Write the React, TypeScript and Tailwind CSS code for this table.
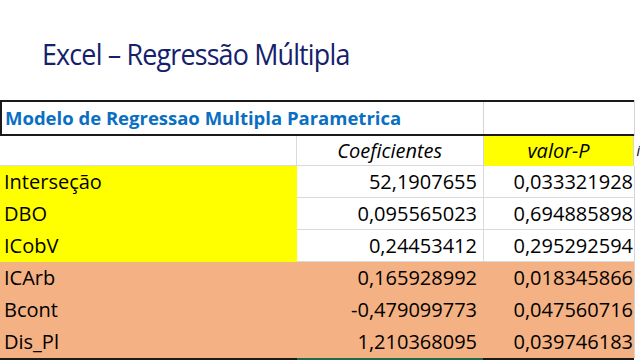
import React from "react";

const rows = [
  { label: "Interseção", b: "52,1907655", c: "0,033321928", kind: "y" },
  { label: "DBO", b: "0,095565023", c: "0,694885898", kind: "y" },
  { label: "ICobV", b: "0,24453412", c: "0,295292594", kind: "y" },
  { label: "ICArb", b: "0,165928992", c: "0,018345866", kind: "o" },
  { label: "Bcont", b: "-0,479099773", c: "0,047560716", kind: "o" },
  { label: "Dis_Pl", b: "1,210368095", c: "0,039746183", kind: "o" },
];

export default function App() {
  return (
    <div
      className="w-[640px] h-[360px] overflow-hidden bg-white flex flex-col"
      style={{ fontFamily: '"Open Sans", sans-serif' }}
    >
      <div className="h-[100px] flex items-center pl-[42px] pt-[8px]">
        <div className="text-[29.5px] leading-none tracking-[-0.9px] text-[#14216b] origin-left scale-x-[0.91] whitespace-nowrap">
          Excel – Regressão Múltipla
        </div>
      </div>
      <div className="flex flex-col text-[20px] text-black">
        {/* row 1 */}
        <div className="flex">
          <div className="w-[634px] flex border-t-2 border-b-2 border-l-2 border-[#1a1a1a] h-[36px]">
            <div className="w-[481px] flex items-center pl-[3px] text-[18.5px] font-bold text-[#0a6fc2] whitespace-nowrap">
              Modelo de Regressao Multipla Parametrica
            </div>
            <div className="w-[151px] border-l border-[#d4d4d4]" />
          </div>
          <div className="flex-1 border-l border-[#d4d4d4]" />
        </div>
        {/* row 2 header */}
        <div className="flex h-[30px]">
          <div className="w-[297px] border-b border-r border-[#d9d9d9]" />
          <div className="w-[186px] border-b border-[#d9d9d9] flex items-center justify-center italic">
            Coeficientes
          </div>
          <div className="w-[151px] bg-[#ffff00] flex items-center justify-center italic border-l border-[#d4d4d4]">
            valor-P
          </div>
          <div className="flex-1 border-l border-[#d4d4d4] pl-[2px] italic text-[14px] whitespace-nowrap leading-[30px]">
            i
          </div>
        </div>
        {rows.map((r, i) => {
          const orange = r.kind === "o";
          return (
            <div key={r.label} className="flex h-[32px]">
              <div
                className={
                  "w-[297px] flex items-center pl-[4px] " +
                  (orange ? "bg-[#f4b183]" : "bg-[#ffff00]")
                }
              >
                {r.label}
              </div>
              <div
                className={
                  "w-[186px] flex items-center justify-end pr-[6px] " +
                  (orange ? "bg-[#f4b183]" : "border-b border-[#d9d9d9]")
                }
              >
                {r.b}
              </div>
              <div
                className={
                  "w-[151px] flex items-center justify-end pr-[1px] border-l " +
                  (orange
                    ? "bg-[#f4b183] border-[#f4b183]"
                    : "border-b border-[#d9d9d9]")
                }
              >
                {r.c}
              </div>
              <div className="flex-1 border-l border-[#d4d4d4]" />
            </div>
          );
        })}
        <div className="flex h-[2px]">
          <div className="w-[297px] bg-[#1a1a1a]" />
          <div className="w-[186px] bg-[#1f6b45]" />
          <div className="w-[151px] bg-[#1a1a1a]" />
        </div>
      </div>
    </div>
  );
}
